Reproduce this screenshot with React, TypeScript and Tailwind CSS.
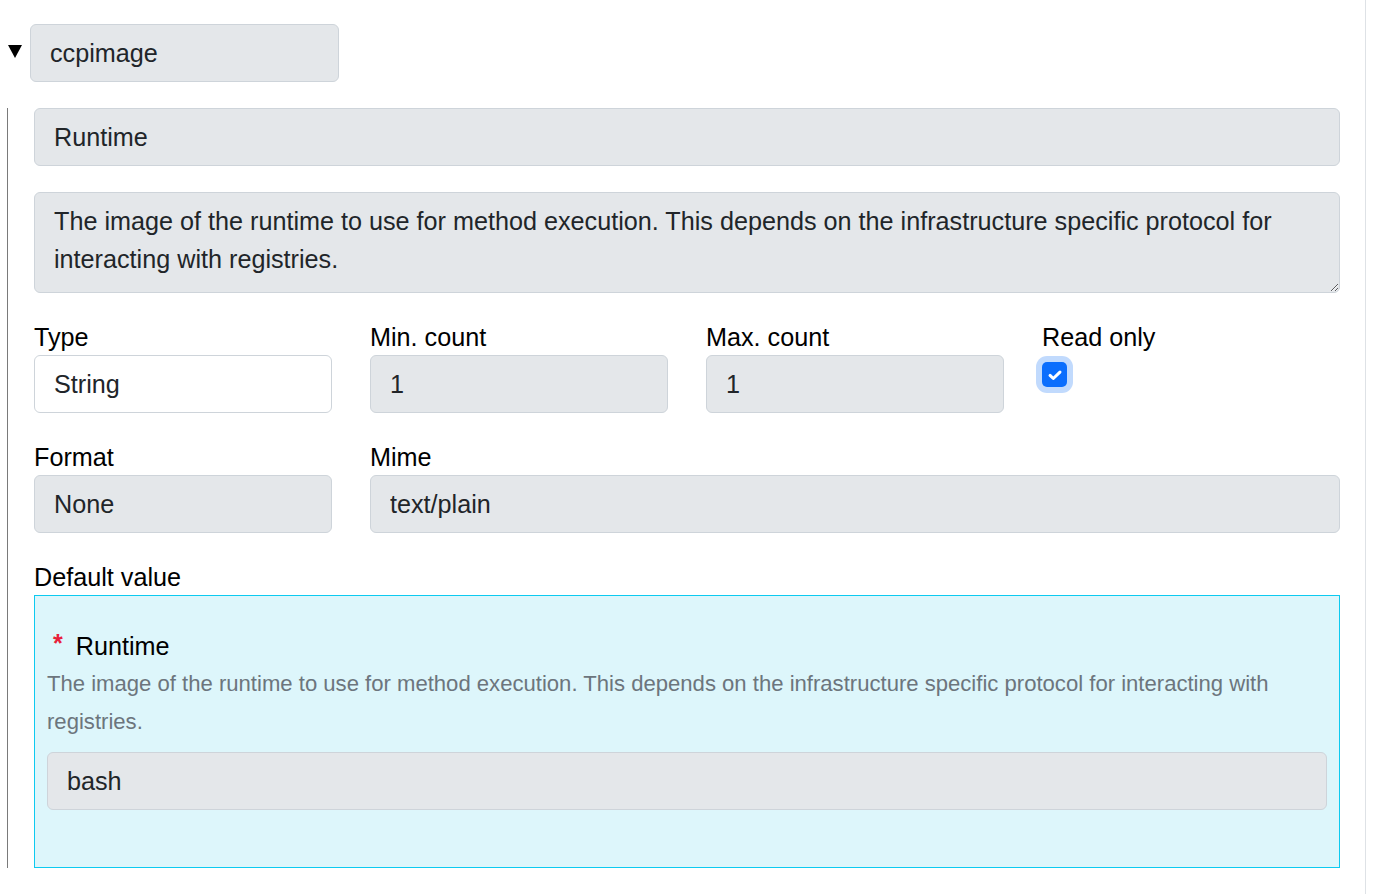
import React from "react";

const inputBase =
  "block w-full h-[58px] rounded-[6px] border border-[#ced4da] px-[19px] text-[25.2px] leading-[36px] text-[#212529] outline-none font-['Liberation_Sans',Arial,sans-serif]";

function Field({ value, white = false }: { value: string; white?: boolean }) {
  return (
    <input
      readOnly
      value={value}
      className={`${inputBase} ${white ? "bg-white" : "bg-[#e4e7ea]"}`}
    />
  );
}

function Label({ children }: { children: React.ReactNode }) {
  return <div className="text-[25.2px] leading-[36px] text-black">{children}</div>;
}

export default function App() {
  return (
    <div className="w-[1366px] min-h-[894px] border-r border-[#dee2e6] bg-white font-['Liberation_Sans',Arial,sans-serif] text-[#212529]">
      <div className="flex items-start pt-[24px] pl-[8px]">
        <svg width="14" height="13" viewBox="0 0 14 13" className="mt-[21px] shrink-0">
          <polygon points="0,0 14,0 7,13" fill="#000" />
        </svg>
        <div className="ml-[8px] w-[309px]">
          <Field value="ccpimage" />
        </div>
      </div>

      <div className="ml-[7px] mt-[26px] border-l border-[#7a7a7a] pl-[26px] pr-[25px]">
        <Field value="Runtime" />
        <textarea
          readOnly
          value="The image of the runtime to use for method execution. This depends on the infrastructure specific protocol for interacting with registries."
          className="mt-[26px] block w-full h-[101px] rounded-[6px] border border-[#ced4da] bg-[#e4e7ea] px-[19px] py-[9px] text-[25.2px] leading-[38px] text-[#212529] outline-none font-['Liberation_Sans',Arial,sans-serif]"
        />

        <div className="mt-[26px] grid grid-cols-[298px_298px_298px_1fr] gap-x-[38px]">
          <div>
            <Label>Type</Label>
            <Field value="String" white />
          </div>
          <div>
            <Label>Min. count</Label>
            <Field value="1" />
          </div>
          <div>
            <Label>Max. count</Label>
            <Field value="1" />
          </div>
          <div>
            <Label>Read only</Label>
            <div className="mt-[1px] -ml-[6px] flex h-[37px] w-[37px] items-center justify-center rounded-[11px] bg-[#c1dafd]">
              <div className="flex h-[25px] w-[25px] items-center justify-center rounded-[5px] bg-[#0b6efd]">
                <svg width="18" height="18" viewBox="0 0 20 20">
                  <path d="M4.5 10.5l3.6 3.4L15.5 6.8" fill="none" stroke="#fff" strokeWidth="3.4" strokeLinecap="round" strokeLinejoin="round" />
                </svg>
              </div>
            </div>
          </div>
        </div>

        <div className="mt-[26px] grid grid-cols-[298px_298px_298px_1fr] gap-x-[38px]">
          <div>
            <Label>Format</Label>
            <Field value="None" />
          </div>
          <div className="col-span-3">
            <Label>Mime</Label>
            <Field value="text/plain" />
          </div>
        </div>

        <div className="mt-[26px]">
          <Label>Default value</Label>
          <div className="border border-[#0dcaf0] bg-[#ddf6fb] px-[12px] pt-[31px] pb-[57px]">
            <div className="flex items-start text-[25.2px] leading-[38px] text-black">
              <span className="pl-[6px] text-[25px] font-bold leading-[32px] text-[#e8203a]">*</span>
              <span className="ml-[13px]">Runtime</span>
            </div>
            <div className="text-[22.1px] leading-[38px] text-[#6c757d]">
              The image of the runtime to use for method execution. This depends on the infrastructure specific protocol for interacting with registries.
            </div>
            <div className="mt-[11px]">
              <Field value="bash" />
            </div>
          </div>
        </div>
      </div>
    </div>
  );
}
